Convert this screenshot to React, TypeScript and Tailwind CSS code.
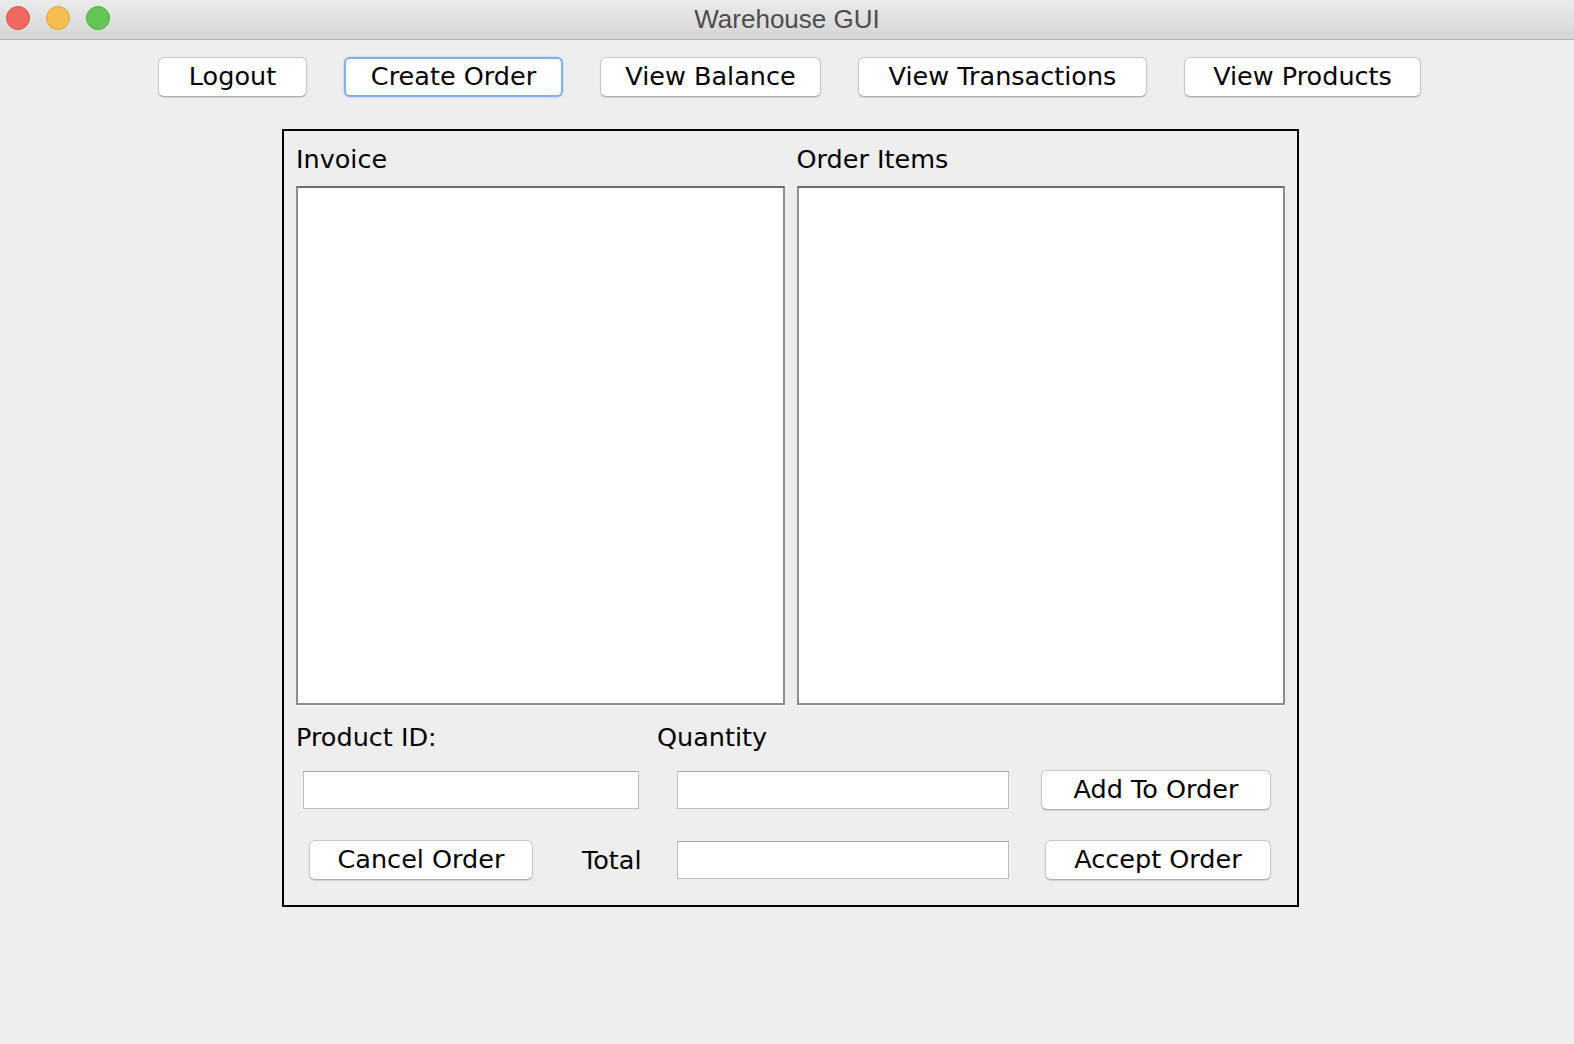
import React from 'react'

const font = { fontFamily: '"DejaVu Sans", "Noto Sans", sans-serif' }

function MacButton({ label, width, focused = false }: { label: string; width: string; focused?: boolean }) {
  return (
    <button
      className={
        focused
          ? `${width} h-[40px] rounded-[6px] bg-white border-2 border-[#80b0f0] text-[25.5px] leading-none text-black shadow-[0_0_2px_rgba(90,150,240,0.6)]`
          : `${width} h-[40px] rounded-[6px] bg-white border border-[#c6c6c6] border-b-[#b0b0b0] text-[25.5px] leading-none text-black shadow-[0_1px_1px_rgba(0,0,0,0.12)]`
      }
    >
      {label}
    </button>
  )
}

function ListBox() {
  return (
    <div className="h-[519px] bg-white border-2 border-[#8e8e8e] border-t-[#6c6c6c] shadow-[0_1px_0_#ffffff]" />
  )
}

function Field({ width }: { width: string }) {
  return <div className={`${width} h-[38px] bg-white border border-[#bdbdbd] border-t-[#a8a8a8]`} />
}

export default function App() {
  return (
    <div className="w-full h-screen bg-[#eeeeee] flex flex-col" style={font}>
      {/* Title bar */}
      <div className="relative h-[40px] flex items-center justify-center bg-gradient-to-b from-[#ebebeb] to-[#d5d5d5] border-b border-[#b3b3b3]">
        <div className="absolute left-[6px] top-[6px] flex gap-[16px]">
          <span className="w-[24px] h-[24px] rounded-full bg-[#ee6a5f] border border-[#d8564b]" />
          <span className="w-[24px] h-[24px] rounded-full bg-[#f6be4f] border border-[#dba43a]" />
          <span className="w-[24px] h-[24px] rounded-full bg-[#62c655] border border-[#50ac43]" />
        </div>
        <span className="text-[26px] text-[#4d4d4d]" style={{ fontFamily: '"Liberation Sans", Arial, sans-serif' }}>
          Warehouse GUI
        </span>
      </div>

      {/* Top buttons */}
      <div className="mt-[17px] pl-[5px] flex justify-center gap-[37px]">
        <MacButton label="Logout" width="w-[149px]" />
        <MacButton label="Create Order" width="w-[219px]" focused />
        <MacButton label="View Balance" width="w-[221px]" />
        <MacButton label="View Transactions" width="w-[289px]" />
        <MacButton label="View Products" width="w-[237px]" />
      </div>

      {/* Main panel */}
      <div className="mt-[32px] ml-[282px] w-[1017px] h-[778px] border-2 border-black px-[12px] pt-[13px]">
        <div className="grid grid-cols-2 gap-x-[12px]">
          <div className="h-[30px] mb-[12px] text-[25.5px] leading-[30px] text-black">Invoice</div>
          <div className="h-[30px] mb-[12px] text-[25.5px] leading-[30px] text-black">Order Items</div>
          <ListBox />
          <ListBox />
        </div>

        <div className="mt-[17px] flex text-[25.5px] leading-[30px] text-black">
          <div className="w-[361px]">Product ID:</div>
          <div>Quantity</div>
        </div>

        <div className="mt-[18px] flex items-center">
          <div className="ml-[7px]">
            <Field width="w-[336px]" />
          </div>
          <div className="ml-[38px]">
            <Field width="w-[332px]" />
          </div>
          <div className="ml-[32px]">
            <MacButton label="Add To Order" width="w-[230px]" />
          </div>
        </div>

        <div className="mt-[30px] flex items-center">
          <div className="ml-[13px]">
            <MacButton label="Cancel Order" width="w-[224px]" />
          </div>
          <div className="ml-[49px] w-[95px] text-[25.5px] text-black">Total</div>
          <Field width="w-[332px]" />
          <div className="ml-[36px]">
            <MacButton label="Accept Order" width="w-[226px]" />
          </div>
        </div>
      </div>
    </div>
  )
}
